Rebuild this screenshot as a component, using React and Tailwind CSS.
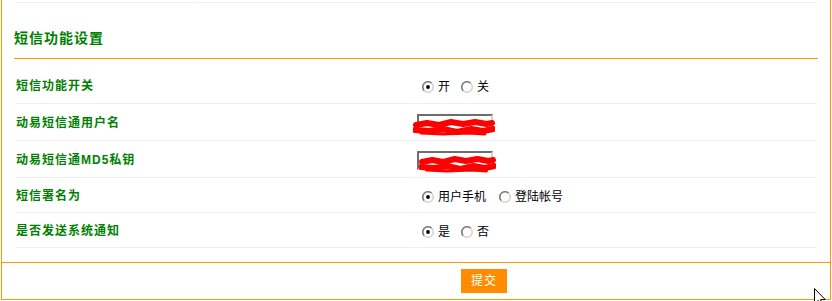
import React from "react";

const FONT = "font-['Liberation_Sans','Noto_Sans_CJK_SC',sans-serif]";

function Radio({ checked }) {
  return (
    <svg width="12" height="12" viewBox="0 0 12 12" className="shrink-0">
      <circle cx="6" cy="6" r="5.2" fill="#ffffff" />
      <path d="M2.3 9.7 A5.2 5.2 0 0 1 9.7 2.3" fill="none" stroke="#7a7a7a" strokeWidth="1.6" />
      <path d="M9.7 2.3 A5.2 5.2 0 0 1 2.3 9.7" fill="none" stroke="#d8d6d0" strokeWidth="1.6" />
      {checked && <circle cx="6" cy="6" r="1.9" fill="#000000" />}
    </svg>
  );
}

function RadioGroup({ options, gap }) {
  return (
    <div className="flex items-center pl-[5px] pt-[2px]">
      {options.map((o, i) => (
        <div key={i} className={`flex items-center ${i > 0 ? gap : ""}`}>
          <Radio checked={i === 0} />
          <span className="ml-[4px] text-[12px] leading-[14px] text-black">{o}</span>
        </div>
      ))}
    </div>
  );
}

function Scribble({ className }) {
  return (
    <svg className={`absolute ${className}`} viewBox="0 0 82 17" preserveAspectRatio="none">
      <path d="M3 6 L14 4 L26 6 L38 3 L50 5 L62 3 L74 5 L79 4" fill="none" stroke="#ff0000" strokeWidth="6" strokeLinejoin="round" strokeLinecap="round" />
      <path d="M2 11 L16 12 L30 10 L44 13 L58 10 L70 12 L80 10" fill="none" stroke="#ff0000" strokeWidth="6" strokeLinejoin="round" strokeLinecap="round" />
      <path d="M8 14 L30 15 L55 14 L72 15" fill="none" stroke="#ff0000" strokeWidth="3" strokeLinecap="round" />
    </svg>
  );
}

function TextInput({ scribble }) {
  return (
    <div className="relative">
      <div className="w-[76px] h-[19px] bg-white border-2 border-t-[#6e6e6e] border-l-[#6e6e6e] border-r-[#d4d0c8] border-b-[#d4d0c8]" />
      <Scribble className={scribble} />
    </div>
  );
}

function Row({ label, h, children }) {
  return (
    <div className="flex gap-[2px]">
      <div className={`w-[399px] ${h} border-b border-[#efefef] flex items-center`}>
        <span className="text-[12px] leading-[14px] font-bold text-[#008000] tracking-[1px]">{label}</span>
      </div>
      <div className={`w-[400px] ${h} border-b border-[#efefef] flex items-center`}>{children}</div>
    </div>
  );
}

export default function App() {
  return (
    <div className={`relative w-[832px] h-[301px] bg-white overflow-hidden ${FONT}`}>
      <div className="ml-[1px] w-[830px] h-[300px] border-l border-r border-b border-[#ff9900] flex flex-col">
        {/* previous table fragment */}
        <div className="ml-[14px] flex gap-[2px]">
          <div className="w-[181px] h-[3px] border-b border-[#efefef]" />
          <div className="w-[618px] h-[3px] border-b border-[#efefef]" />
        </div>

        {/* heading */}
        <div className="ml-[12px] w-[804px] mt-[26px] h-[30px] border-b border-[#ff9900]">
          <div className="text-[14px] leading-[18px] font-bold text-[#008000] tracking-[1px]">短信功能设置</div>
        </div>

        {/* table */}
        <div className="ml-[14px] mt-[10px] flex flex-col gap-[2px]">
          <Row label="短信功能开关" h="h-[35px]">
            <RadioGroup options={["开", "关"]} gap="ml-[11px]" />
          </Row>
          <Row label="动易短信通用户名" h="h-[35px]">
            <TextInput scribble="-left-[4px] top-[5px] w-[82px] h-[17px]" />
          </Row>
          <Row label="动易短信通MD5私钥" h="h-[35px]">
            <TextInput scribble="left-[2px] top-[5px] w-[77px] h-[17px]" />
          </Row>
          <Row label="短信署名为" h="h-[33px]">
            <RadioGroup options={["用户手机", "登陆帐号"]} gap="ml-[13px]" />
          </Row>
          <Row label="是否发送系统通知" h="h-[33px]">
            <RadioGroup options={["是", "否"]} gap="ml-[11px]" />
          </Row>
        </div>

        {/* submit bar */}
        <div className="mt-[14px] border-t border-[#ff9900] flex-1">
          <button className="ml-[459px] mt-[6px] w-[46px] h-[24px] bg-[#ff8c00] text-white text-[12px] leading-[24px] tracking-[1px] flex items-center justify-center">
            提交
          </button>
        </div>
      </div>

      {/* mouse cursor */}
      <svg className="absolute left-[814px] top-[288px]" width="12" height="19" viewBox="0 0 12 19">
        <path d="M0.5 0.5 L0.5 16 L4.2 12.4 L6.8 18.3 L9 17.3 L6.5 11.6 L11.3 11.6 Z" fill="#ffffff" stroke="#000000" strokeWidth="1" />
      </svg>
    </div>
  );
}
